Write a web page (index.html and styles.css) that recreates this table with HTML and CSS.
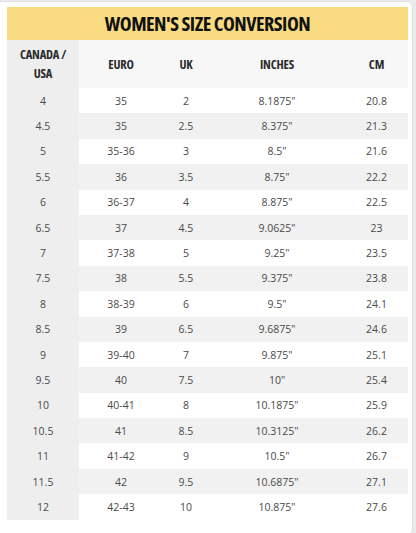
FILE: index.html
```html
<!DOCTYPE html>
<html lang="en">
<head>
<meta charset="UTF-8">
<title>Women's Size Conversion</title>
<link rel="stylesheet" href="styles.css">
</head>
<body>
	<div class="card">
		<h2 class="title">WOMEN'S SIZE CONVERSION</h2>
		<table class="sizes">
			<colgroup>
				<col class="c1"><col class="c2"><col class="c3"><col class="c4"><col class="c5">
			</colgroup>
			<thead>
				<tr><th>CANADA /<br>USA</th><th>EURO</th><th>UK</th><th>INCHES</th><th>CM</th></tr>
			</thead>
			<tbody>
				<tr><td>4</td><td>35</td><td>2</td><td>8.1875"</td><td>20.8</td></tr>
				<tr><td>4.5</td><td>35</td><td>2.5</td><td>8.375"</td><td>21.3</td></tr>
				<tr><td>5</td><td>35-36</td><td>3</td><td>8.5"</td><td>21.6</td></tr>
				<tr><td>5.5</td><td>36</td><td>3.5</td><td>8.75"</td><td>22.2</td></tr>
				<tr><td>6</td><td>36-37</td><td>4</td><td>8.875"</td><td>22.5</td></tr>
				<tr><td>6.5</td><td>37</td><td>4.5</td><td>9.0625"</td><td>23</td></tr>
				<tr><td>7</td><td>37-38</td><td>5</td><td>9.25"</td><td>23.5</td></tr>
				<tr><td>7.5</td><td>38</td><td>5.5</td><td>9.375"</td><td>23.8</td></tr>
				<tr><td>8</td><td>38-39</td><td>6</td><td>9.5"</td><td>24.1</td></tr>
				<tr><td>8.5</td><td>39</td><td>6.5</td><td>9.6875"</td><td>24.6</td></tr>
				<tr><td>9</td><td>39-40</td><td>7</td><td>9.875"</td><td>25.1</td></tr>
				<tr><td>9.5</td><td>40</td><td>7.5</td><td>10"</td><td>25.4</td></tr>
				<tr><td>10</td><td>40-41</td><td>8</td><td>10.1875"</td><td>25.9</td></tr>
				<tr><td>10.5</td><td>41</td><td>8.5</td><td>10.3125"</td><td>26.2</td></tr>
				<tr><td>11</td><td>41-42</td><td>9</td><td>10.5"</td><td>26.7</td></tr>
				<tr><td>11.5</td><td>42</td><td>9.5</td><td>10.6875"</td><td>27.1</td></tr>
				<tr><td>12</td><td>42-43</td><td>10</td><td>10.875"</td><td>27.6</td></tr>
			</tbody>
		</table>
	</div>
</body>
</html>
```

FILE: styles.css
```css
body {margin: 0;background-color: #ebebeb;font-family: "Open Sans", "DejaVu Sans", sans-serif;}
h2 {margin: 0;}
.card {margin: 1px 3px 0 -5px;background-color: #fff;border: 1px solid #e0e0e0;border-radius: 6px;padding: 5px 4px 14px 11px;}
.title {height: 33px;line-height: 33px;background-color: #f9dc81;text-align: center;font-size: 20px;font-weight: 700;font-stretch: 75%;letter-spacing: -0.5px;color: #111;}
.sizes {width: 401px;border-collapse: collapse;table-layout: fixed;}
.sizes .c1 {width: 72px;}
.sizes .c2 {width: 84px;}
.sizes .c3 {width: 46px;}
.sizes .c4 {width: 136px;}
.sizes .c5 {width: 63px;}
.sizes th {height: 48px;padding: 0;background-color: #f7f7f7;font-size: 12.5px;font-weight: 700;font-stretch: 75%;letter-spacing: -0.2px;line-height: 19px;color: #2b2b2b;text-align: center;}
.sizes td {height: 25.4px;padding: 0;font-size: 10.5px;color: #4a4a4a;text-align: center;}
.sizes tbody tr:nth-child(even) td {background-color: #f1f1f1;}
.sizes th:first-child, .sizes td:first-child, .sizes tbody tr:nth-child(even) td:first-child {background-color: #eeeeee;}
```
